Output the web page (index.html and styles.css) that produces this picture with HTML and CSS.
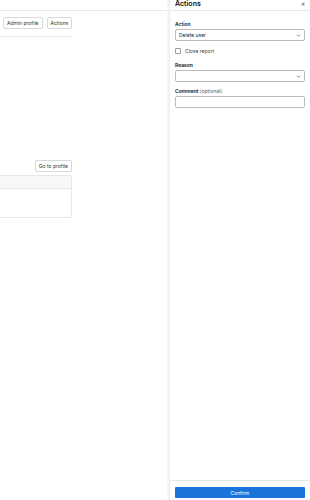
FILE: index.html
```html
<!DOCTYPE html>
<html lang="en">
<head>
  <meta charset="UTF-8">
  <title>Report actions</title>
  <link rel="stylesheet" href="styles.css">
</head>
<body>
  <div class="page">
    <div class="main">
      <div class="topbar"></div>
      <div class="content">
        <div class="toolbar">
          <button class="btn">Admin profile</button>
          <button class="btn">Actions</button>
        </div>
        <div class="spacer"></div>
        <div class="profile-row">
          <button class="btn">Go to profile</button>
        </div>
        <div class="table">
          <div class="table-head"></div>
          <div class="table-body"></div>
        </div>
      </div>
    </div>
    <div class="drawer-shadow"></div>
    <div class="drawer">
      <div class="drawer-header">
        <span class="drawer-title">Actions</span>
        <span class="close">&#x2715;</span>
      </div>
      <div class="drawer-body">
        <label class="label">Action</label>
        <div class="select">
          <span>Delete user</span>
          <svg class="chevron" viewBox="0 0 10 10" width="5" height="5"><path d="M2 3.5 L5 6.5 L8 3.5" fill="none" stroke="#555" stroke-width="1.4"/></svg>
        </div>
        <div class="check-row">
          <span class="checkbox"></span>
          <span>Close report</span>
        </div>
        <label class="label">Reason</label>
        <div class="select">
          <span></span>
          <svg class="chevron" viewBox="0 0 10 10" width="5" height="5"><path d="M2 3.5 L5 6.5 L8 3.5" fill="none" stroke="#555" stroke-width="1.4"/></svg>
        </div>
        <label class="label">Comment <span class="muted">(optional)</span></label>
        <div class="input"></div>
      </div>
      <div class="drawer-footer">
        <button class="confirm">Confirm</button>
      </div>
    </div>
  </div>
</body>
</html>
```

FILE: styles.css
```css
body {
  margin: 0;
  font-family: Inter, "Noto Sans", sans-serif;
  font-size: 6px;
  color: #222;
  background: #fff;
}
.page {
  display: flex;
  height: 500px;
  overflow: hidden;
}
.main {
  flex: 1;
}
.topbar {
  height: 10px;
  border-bottom: 1px solid #e6e6e6;
}
.content {
  width: 72px;
}
.toolbar {
  display: flex;
  gap: 4px;
  padding: 6px 0 7px 3px;
  border-bottom: 1px solid #e6e6e6;
}
.btn {
  font-family: inherit;
  font-size: 5px;
  color: #333;
  background: #fff;
  border: 1px solid #d8d8d8;
  border-radius: 2px;
  height: 12px;
  padding: 0 3px;
  white-space: nowrap;
}
.spacer {
  height: 123px;
}
.profile-row {
  display: flex;
  justify-content: flex-end;
  margin-bottom: 3px;
}
.table {
  border: 1px solid #e6e6e6;
  border-left: none;
  border-radius: 0 2px 2px 0;
}
.table-head {
  height: 12px;
  background: #f8f8fa;
  border-bottom: 1px solid #e6e6e6;
}
.table-body {
  height: 28px;
}
.drawer-shadow {
  width: 3px;
  background: linear-gradient(to right, #fafafa, #ececec);
}
.drawer {
  width: 140px;
  display: flex;
  flex-direction: column;
  background: #fff;
}
.drawer-header {
  display: flex;
  justify-content: space-between;
  align-items: center;
  height: 10px;
  padding: 0 5px;
  border-bottom: 1px solid #e6e6e6;
}
.drawer-title {
  font-size: 7px;
  font-weight: 600;
  color: #111;
  margin-top: -3px;
}
.close {
  font-size: 5px;
  color: #333;
  margin-top: -3px;
}
.drawer-body {
  flex: 1;
  display: flex;
  flex-direction: column;
  padding: 10px 5px 0;
}
.label {
  font-size: 5px;
  font-weight: 600;
  color: #111;
  margin-bottom: 2px;
}
.muted {
  font-weight: 400;
  color: #555;
}
.select {
  display: flex;
  justify-content: space-between;
  align-items: center;
  height: 10px;
  padding: 0 3px;
  border: 1px solid #bcbcbc;
  border-radius: 2px;
  font-size: 5px;
  margin-bottom: 7px;
}
.select + .label {
  margin-top: -1px;
}
.chevron {
  display: block;
}
.check-row {
  display: flex;
  align-items: center;
  gap: 4px;
  font-size: 5px;
  color: #444;
  margin: 0 0 8px;
}
.checkbox {
  width: 4px;
  height: 4px;
  border: 1px solid #999;
  border-radius: 1px;
}
.input {
  height: 10px;
  border: 1px solid #bcbcbc;
  border-radius: 2px;
}
.drawer-footer {
  border-top: 1px solid #e6e6e6;
  padding: 6px 5px 2px;
}
.confirm {
  display: block;
  width: 100%;
  height: 11px;
  border: none;
  border-radius: 1px;
  background: #1a73d9;
  color: #fff;
  font-family: inherit;
  font-size: 5px;
}
```
